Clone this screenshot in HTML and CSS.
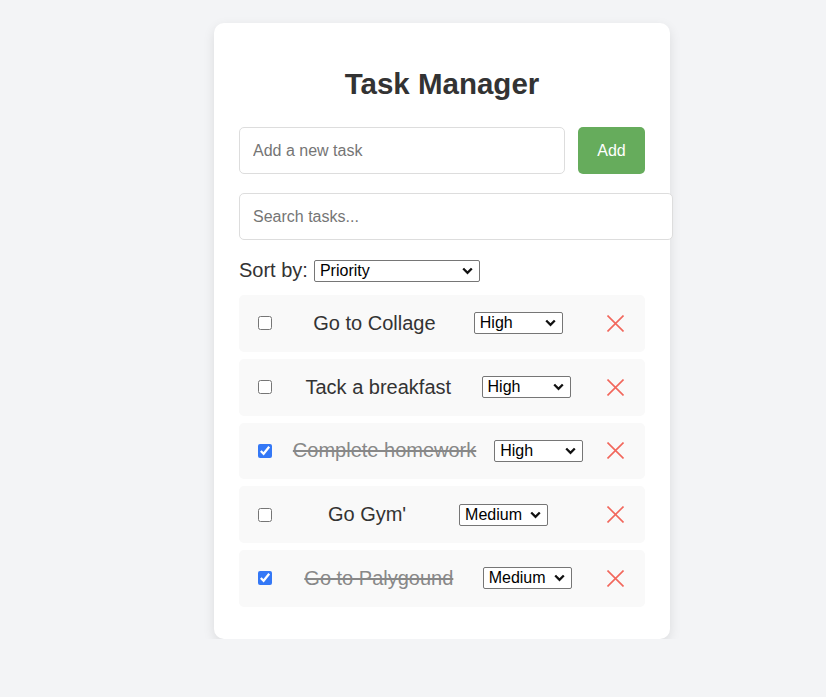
FILE: index.html
```html
<!DOCTYPE html>
<html lang="en">
<head>
<meta charset="utf-8">
<title>Task Manager</title>
<link rel="stylesheet" href="styles.css">
</head>
<body>
<div class="card">
  <h1 class="title">Task Manager</h1>
  <div class="add-row">
    <input class="add-input" type="text" placeholder="Add a new task">
    <button class="add-btn">Add</button>
  </div>
  <input class="search" type="text" placeholder="Search tasks...">
  <div class="sort-row">
    <span class="sort-label">Sort by:</span>
    <select class="sort-select">
      <option>Priority</option>
      <option>Alphabetical</option>
    </select>
  </div>
  <ul class="tasks">
    <li class="task">
      <input type="checkbox" class="task-check">
      <span class="task-text">Go to Collage</span>
      <select class="prio"><option selected>High</option><option>Medium</option><option>Low</option></select>
      <button class="del" aria-label="Delete"><svg width="17" height="17" viewBox="0 0 17 17"><path d="M0.5 0.5L16.5 16.5M16.5 0.5L0.5 16.5" stroke="#f2675c" stroke-width="1.6" fill="none"/></svg></button>
    </li>
    <li class="task">
      <input type="checkbox" class="task-check">
      <span class="task-text">Tack a breakfast</span>
      <select class="prio"><option selected>High</option><option>Medium</option><option>Low</option></select>
      <button class="del" aria-label="Delete"><svg width="17" height="17" viewBox="0 0 17 17"><path d="M0.5 0.5L16.5 16.5M16.5 0.5L0.5 16.5" stroke="#f2675c" stroke-width="1.6" fill="none"/></svg></button>
    </li>
    <li class="task">
      <input type="checkbox" class="task-check" checked>
      <span class="task-text done">Complete homework</span>
      <select class="prio"><option selected>High</option><option>Medium</option><option>Low</option></select>
      <button class="del" aria-label="Delete"><svg width="17" height="17" viewBox="0 0 17 17"><path d="M0.5 0.5L16.5 16.5M16.5 0.5L0.5 16.5" stroke="#f2675c" stroke-width="1.6" fill="none"/></svg></button>
    </li>
    <li class="task">
      <input type="checkbox" class="task-check">
      <span class="task-text">Go Gym'</span>
      <select class="prio"><option>High</option><option selected>Medium</option><option>Low</option></select>
      <button class="del" aria-label="Delete"><svg width="17" height="17" viewBox="0 0 17 17"><path d="M0.5 0.5L16.5 16.5M16.5 0.5L0.5 16.5" stroke="#f2675c" stroke-width="1.6" fill="none"/></svg></button>
    </li>
    <li class="task">
      <input type="checkbox" class="task-check" checked>
      <span class="task-text done">Go to Palygound</span>
      <select class="prio"><option>High</option><option selected>Medium</option><option>Low</option></select>
      <button class="del" aria-label="Delete"><svg width="17" height="17" viewBox="0 0 17 17"><path d="M0.5 0.5L16.5 16.5M16.5 0.5L0.5 16.5" stroke="#f2675c" stroke-width="1.6" fill="none"/></svg></button>
    </li>
  </ul>
</div>
</body>
</html>
```
FILE: styles.css
```css
html, body {
  margin: 0;
  padding: 0;
}
body {
  background: #f3f4f6;
  font-family: "Liberation Sans", Arial, sans-serif;
  color: #333;
}
.card {
  box-sizing: border-box;
  width: 456px;
  margin: 23px 0 0 214px;
  padding: 25px;
  background: #fff;
  border-radius: 10px;
  box-shadow: 0 4px 12px rgba(0, 0, 0, 0.1);
}
.title {
  margin: 19px 0 26px;
  font-size: 29.5px;
  line-height: 34px;
  font-weight: bold;
  text-align: center;
  color: #333;
}
.add-row {
  display: flex;
  gap: 13px;
}
.add-input {
  flex: 1;
  min-width: 0;
  box-sizing: border-box;
  height: 47px;
  padding: 0 13px;
  border: 1px solid #ddd;
  border-radius: 5px;
  font-family: inherit;
  font-size: 16px;
  color: #333;
  outline: none;
}
.add-btn {
  box-sizing: border-box;
  width: 67px;
  height: 47px;
  padding: 0;
  border: none;
  border-radius: 5px;
  background: #66ac5c;
  color: #fff;
  font-family: inherit;
  font-size: 16px;
}
.search {
  display: block;
  box-sizing: content-box;
  width: 100%;
  height: 45px;
  margin-top: 19px;
  padding: 0 13px;
  border: 1px solid #ddd;
  border-radius: 5px;
  font-family: inherit;
  font-size: 16px;
  outline: none;
}
.add-input::placeholder,
.search::placeholder {
  color: #757575;
}
.sort-row {
  display: flex;
  align-items: center;
  gap: 6px;
  height: 23px;
  margin: 19px 0 13px;
}
.sort-label {
  font-size: 20px;
  color: #333;
}
.sort-select,
.prio {
  -webkit-appearance: none;
  appearance: none;
  box-sizing: border-box;
  height: 22px;
  padding: 0 18px 0 5px;
  font-family: "Liberation Sans", Arial, sans-serif;
  font-size: 16px;
  line-height: 20px;
  color: #000;
  background-color: #fff;
  background-image: url("data:image/svg+xml,%3Csvg xmlns='http://www.w3.org/2000/svg' width='11' height='8' viewBox='0 0 11 8'%3E%3Cpath d='M1.2 1.5L5.5 5.8L9.8 1.5' stroke='%23111' stroke-width='2.3' fill='none'/%3E%3C/svg%3E");
  background-repeat: no-repeat;
  background-position: right 6px center;
  border: 1px solid #767676;
  border-radius: 2px;
}
.sort-select {
  width: 166px;
}
.prio {
  width: 89px;
}
.tasks {
  list-style: none;
  margin: 0;
  padding: 0;
}
.task {
  box-sizing: border-box;
  display: flex;
  align-items: center;
  justify-content: space-between;
  height: 56.75px;
  margin-bottom: 7px;
  padding: 0 15px;
  background: #f9f9f9;
  border-radius: 5px;
}
.task-check {
  width: 14px;
  height: 14px;
  margin: 3px 3px 3px 4px;
  accent-color: #3478f6;
}
.task-text {
  font-size: 20px;
  color: #333;
}
.task-text.done {
  color: #888;
  text-decoration: line-through;
}
.del {
  display: flex;
  align-items: center;
  justify-content: center;
  width: 29px;
  height: 29px;
  padding: 0;
  border: none;
  background: none;
}
```
